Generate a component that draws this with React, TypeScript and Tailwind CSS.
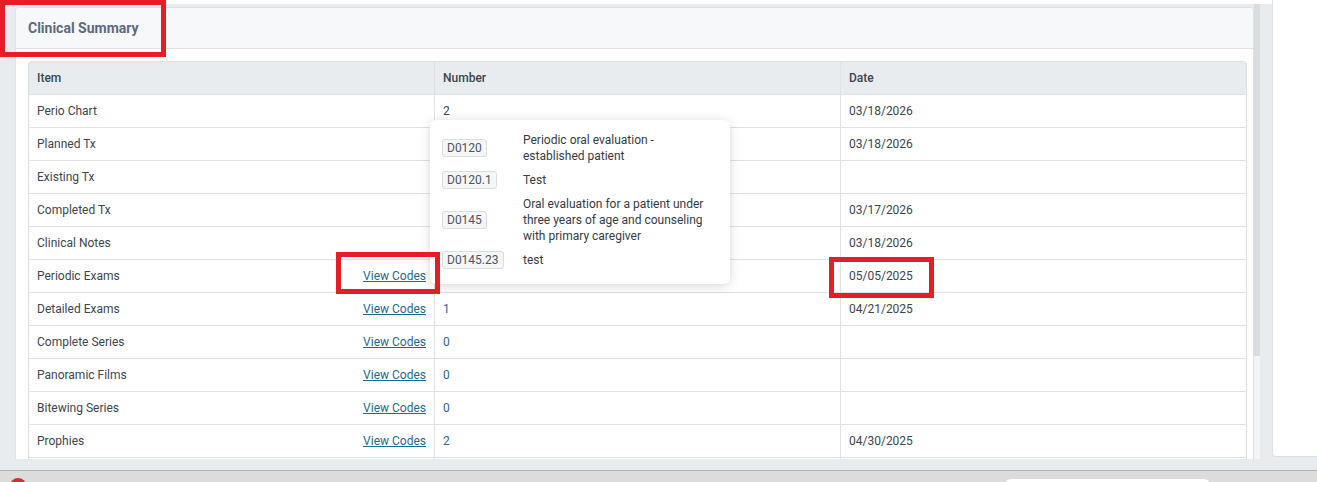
import React from 'react';

interface SummaryRow {
  item: string;
  codes?: boolean;
  number: string;
  date: string;
}

const rows: SummaryRow[] = [
  { item: 'Perio Chart', number: '2', date: '03/18/2026' },
  { item: 'Planned Tx', number: '1', date: '03/18/2026' },
  { item: 'Existing Tx', number: '0', date: '' },
  { item: 'Completed Tx', number: '3', date: '03/17/2026' },
  { item: 'Clinical Notes', number: '2', date: '03/18/2026' },
  { item: 'Periodic Exams', codes: true, number: '4', date: '05/05/2025' },
  { item: 'Detailed Exams', codes: true, number: '1', date: '04/21/2025' },
  { item: 'Complete Series', codes: true, number: '0', date: '' },
  { item: 'Panoramic Films', codes: true, number: '0', date: '' },
  { item: 'Bitewing Series', codes: true, number: '0', date: '' },
  { item: 'Prophies', codes: true, number: '2', date: '04/30/2025' },
];

const procedureCodes = [
  { code: 'D0120', desc: 'Periodic oral evaluation - established patient' },
  { code: 'D0120.1', desc: 'Test' },
  { code: 'D0145', desc: 'Oral evaluation for a patient under three years of age and counseling with primary caregiver' },
  { code: 'D0145.23', desc: 'test' },
];

const cols = 'grid grid-cols-[405px_406px_1fr]';

const CodesPopover: React.FC = () => (
  <div className="absolute left-[430px] top-[120px] w-[300px] rounded-[6px] bg-white pt-[12px] pb-[15px] pl-[12px] pr-[16px] shadow-[0_2px_12px_rgba(0,0,0,0.16)]">
    <div className="grid grid-cols-[81px_1fr] gap-y-[7px] items-center">
      {procedureCodes.map((c) => (
        <React.Fragment key={c.code}>
          <div className="flex">
            <span className="flex h-[18px] items-center rounded-[3px] border border-[#d8dde2] bg-[#f5f6f8] px-[4px] text-[12px] leading-none text-[#4a5561]">
              {c.code}
            </span>
          </div>
          <div className="text-[12px] leading-[16px] text-[#333c46]">{c.desc}</div>
        </React.Fragment>
      ))}
    </div>
  </div>
);

const App: React.FC = () => {
  return (
    <div className="relative h-[482px] w-[1317px] overflow-hidden bg-[#e9ecef] font-['Roboto',sans-serif]">
      <div className="flex h-[470px]">
        <div className="flex w-[1272px] flex-col">
          <div className="h-[4px] shrink-0 bg-white" />
          <div className="flex min-h-0 flex-1 pl-[15px] pb-[11px]">
            <div className="mt-[3px] flex w-[1239px] flex-col overflow-hidden rounded-t-[4px] border border-b-0 border-[#dee2e6] bg-white">
              <div className="flex h-[41px] shrink-0 items-center border-b border-[#dee2e6] bg-[#f7f8fa] px-[12px]">
                <span className="text-[14px] font-bold text-[#5b6a7e]">Clinical Summary</span>
              </div>
              <div className="min-h-0 flex-1 overflow-hidden pt-[12px] pl-[12px] pr-[6px]">
                <div className={`${cols} h-[33px] rounded-t-[4px] border border-b-0 border-[#dee2e6] bg-[#e9ecef] text-[12px] font-medium text-[#3a4450]`}>
                  <div className="flex items-center px-[8px]">Item</div>
                  <div className="flex items-center border-l border-[#dee2e6] px-[8px]">Number</div>
                  <div className="flex items-center border-l border-[#dee2e6] px-[8px]">Date</div>
                </div>
                {rows.map((r) => (
                  <div
                    key={r.item}
                    className={`${cols} h-[33px] border border-b-0 border-[#dee2e6] text-[12px] text-[#3c4651]`}
                  >
                    <div className="flex items-center justify-between px-[8px]">
                      <span>{r.item}</span>
                      {r.codes && <a className="cursor-pointer text-[#1b6b8f] underline">View Codes</a>}
                    </div>
                    <div
                      className={
                        r.codes
                          ? 'flex items-center border-l border-[#dee2e6] px-[8px] text-[#2f6590]'
                          : 'flex items-center border-l border-[#dee2e6] px-[8px]'
                      }
                    >
                      {r.number}
                    </div>
                    <div className="flex items-center border-l border-[#dee2e6] px-[8px]">{r.date}</div>
                  </div>
                ))}
                {/* next row, scrolled out of view */}
                <div className={`${cols} h-[33px] border border-b-0 border-[#dee2e6]`}>
                  <div />
                  <div className="border-l border-[#dee2e6]" />
                  <div className="border-l border-[#dee2e6]" />
                </div>
              </div>
            </div>
            {/* scrollbar */}
            <div className="flex w-[6px] flex-col bg-[#f2f4f6]">
              <div className="h-[352px] bg-[#d9dde1]" />
            </div>
          </div>
        </div>
        <div className="h-[457px] flex-1 rounded-bl-[4px] border-b border-l border-[#dde1e5] bg-white" />
      </div>

      <div className="relative h-[12px] border-t border-[#b3b3b3] bg-[#dcdcdc]">
        <div className="absolute left-[10px] top-[7px] h-[16px] w-[16px] rounded-full bg-[#d32f2f]" />
        <div className="absolute left-[1005px] top-[8px] h-[20px] w-[205px] rounded-[6px] bg-white" />
      </div>

      <CodesPopover />

      {/* highlight boxes */}
      <div className="absolute left-0 top-0 h-[57px] w-[166px] border-[5px] border-[#e41e25]" />
      <div className="absolute left-[336px] top-[252px] h-[42px] w-[104px] border-[5px] border-[#e41e25]" />
      <div className="absolute left-[829px] top-[257px] h-[41px] w-[105px] border-[5px] border-[#e41e25]" />
    </div>
  );
};

export default App;
